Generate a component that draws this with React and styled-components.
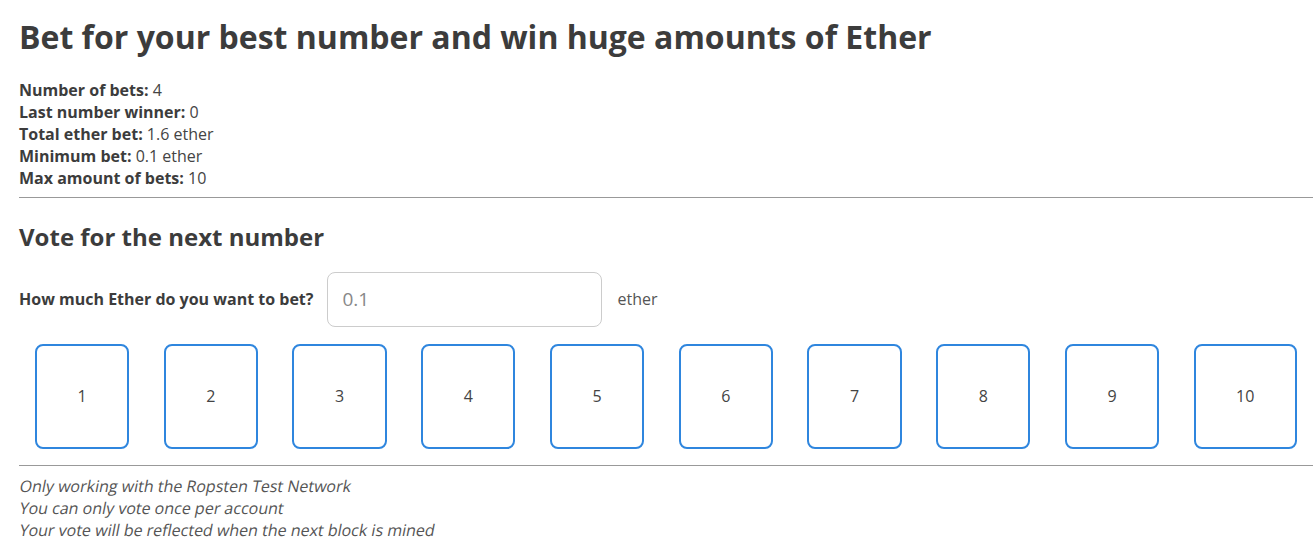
import React from "react";
import styled, { createGlobalStyle } from "styled-components";

const Global = createGlobalStyle`
  html, body { margin: 0; padding: 0; background: #fff; }
  body { font-family: "Open Sans", "Noto Sans", sans-serif; color: #444; }
`;

const Page = styled.div`
  padding: 16px 0 0 19px;
`;

const Title = styled.h1`
  margin: 0;
  font-size: 32px;
  line-height: 1.3;
  font-weight: 700;
  color: #3c3c3c;
`;

const Stats = styled.div`
  margin-top: 21px;
  font-size: 16px;
  line-height: 22px;
  color: #444;
`;

const StatLine = styled.div`
  b { font-weight: 700; color: #3c3c3c; }
`;

const Rule = styled.hr`
  margin: ${(p) => p.$top}px 0 ${(p) => p.$bottom}px 0;
  border: 0;
  border-top: 1px solid #999;
  height: 0;
`;

const SubTitle = styled.h2`
  margin: 0;
  font-size: 24px;
  line-height: 1.3;
  font-weight: 700;
  color: #3c3c3c;
`;

const BetRow = styled.div`
  margin-top: 20px;
  display: flex;
  align-items: center;
`;

const Label = styled.label`
  font-size: 16px;
  font-weight: 700;
  color: #3c3c3c;
`;

const Amount = styled.input`
  margin-left: 14px;
  width: 275px;
  height: 55px;
  box-sizing: border-box;
  border: 1px solid #ccc;
  border-radius: 8px;
  padding: 0 14px;
  font-family: "Open Sans", sans-serif;
  font-size: 19px;
  color: #888;
  outline: none;
  &::placeholder { color: #888; }
`;

const Unit = styled.span`
  margin-left: 15px;
  font-size: 16px;
  color: #555;
`;

const Numbers = styled.div`
  margin-top: 17px;
  padding: 0 16px;
  display: flex;
  justify-content: space-between;
`;

const NumberButton = styled.button`
  height: 105px;
  box-sizing: border-box;
  padding: 0 40.5px;
  border: 2px solid #2f86de;
  border-radius: 8px;
  background: #fff;
  font-family: "Open Sans", sans-serif;
  font-size: 16px;
  color: #444;
  cursor: pointer;
`;

const Notes = styled.div`
  font-size: 16px;
  line-height: 22px;
  color: #555;
`;

const NoteLine = styled.div`
  display: block;
  transform: skewX(-11deg);
  transform-origin: 0 70%;
`;

const stats = [
  ["Number of bets:", "4"],
  ["Last number winner:", "0"],
  ["Total ether bet:", "1.6 ether"],
  ["Minimum bet:", "0.1 ether"],
  ["Max amount of bets:", "10"],
];

export default function App() {
  return (
    <Page>
      <Global />
      <Title>Bet for your best number and win huge amounts of Ether</Title>
      <Stats>
        {stats.map(([k, v]) => (
          <StatLine key={k}>
            <b>{k}</b> {v}
          </StatLine>
        ))}
      </Stats>
      <Rule $top={8} $bottom={23} />
      <SubTitle>Vote for the next number</SubTitle>
      <BetRow>
        <Label>How much Ether do you want to bet?</Label>
        <Amount placeholder="0.1" />
        <Unit>ether</Unit>
      </BetRow>
      <Numbers>
        {Array.from({ length: 10 }, (_, i) => (
          <NumberButton key={i}>{i + 1}</NumberButton>
        ))}
      </Numbers>
      <Rule $top={16} $bottom={9} />
      <Notes>
        <NoteLine>Only working with the Ropsten Test Network</NoteLine>
        <NoteLine>You can only vote once per account</NoteLine>
        <NoteLine>Your vote will be reflected when the next block is mined</NoteLine>
      </Notes>
    </Page>
  );
}
